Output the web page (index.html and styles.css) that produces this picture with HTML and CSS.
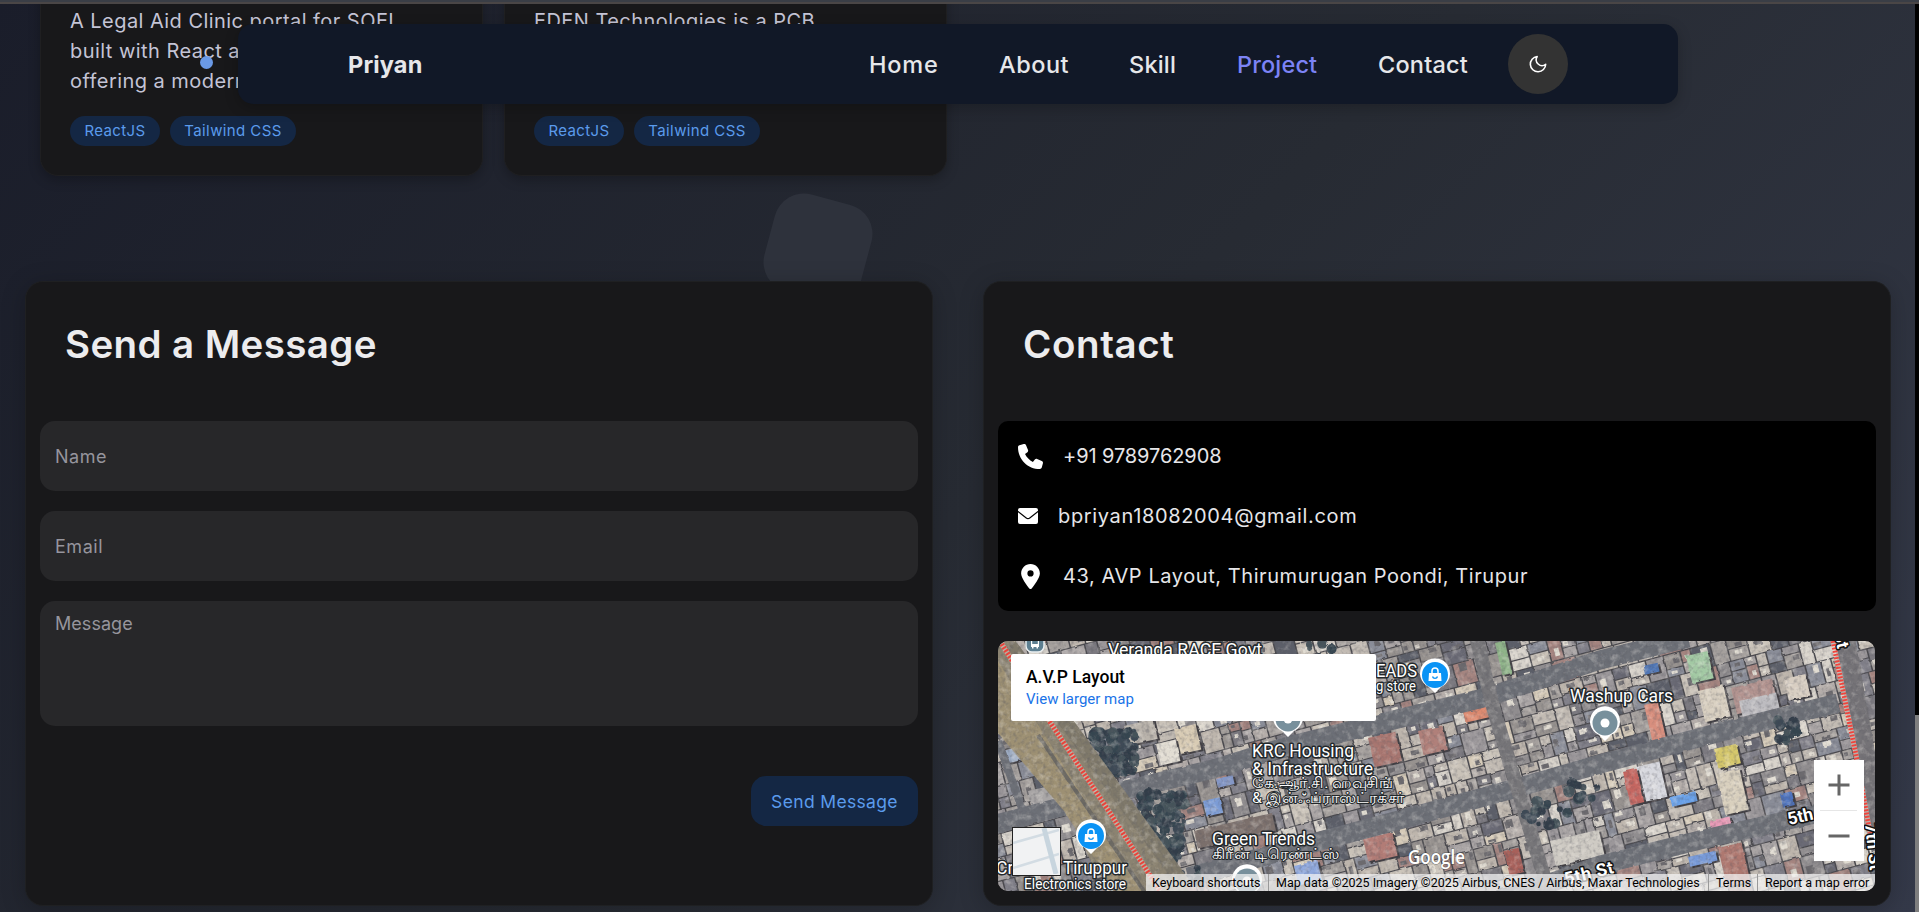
FILE: index.html
```html
<!DOCTYPE html>
<html lang="en">
<head>
<meta charset="utf-8">
<title>Priyan</title>
<link rel="stylesheet" href="styles.css">
</head>
<body>
<div class="page">
  <div class="blob"></div>
  <main class="content">
    <section class="projects">
      <article class="project">
        <p class="project-text">A Legal Aid Clinic portal for SOEL<br>built with React and Tailwind,<br>offering a modern interface.</p>
        <div class="tags"><span class="tag tag-react">ReactJS</span><span class="tag tag-tw">Tailwind CSS</span></div>
      </article>
      <article class="project">
        <p class="project-text">EDEN Technologies is a PCB<br><br><br></p>
        <div class="tags"><span class="tag tag-react">ReactJS</span><span class="tag tag-tw">Tailwind CSS</span></div>
      </article>
    </section>
    <section class="contact">
      <form class="card">
        <h2 class="title t-send">Send a Message</h2>
        <input class="field" placeholder="Name">
        <input class="field" placeholder="Email">
        <textarea class="field area" placeholder="Message"></textarea>
        <button class="send" type="button">Send Message</button>
      </form>
      <div class="card">
        <h2 class="title t-contact">Contact</h2>
        <ul class="details">
          <li class="row"><svg class="ico" width="25" height="25" viewBox="0 0 512 512"><path d="M164.900 24.600c-7.700-18.600-28-28.500-47.400-23.200l-88 24C12.100 30.200 0 46 0 64c0 247.400 200.600 448 448 448 18 0 33.800-12.100 38.600-29.500l24-88c5.300-19.400-4.600-39.700-23.200-47.400l-96-40c-16.300-6.800-35.200-2.100-46.300 11.600L304.700 368C234.300 334.700 177.300 277.700 144 207.300L193.300 167c13.700-11.200 18.400-30 11.600-46.300z"/></svg><span class="d1">+91 9789762908</span></li>
          <li class="row"><svg class="ico" width="20" height="20" viewBox="0 0 20 20"><path d="M2 2h16a2 2 0 0 1 2 2v.700l-8.600 6.700a2.300 2.300 0 0 1-2.800 0L0 4.700v-.700a2 2 0 0 1 2-2zM0 6.300l7.900 6.200a3.500 3.500 0 0 0 4.200 0l7.900-6.200v9.700a2 2 0 0 1-2 2H2a2 2 0 0 1-2-2z"/></svg><span class="d2">bpriyan18082004@gmail.com</span></li>
          <li class="row"><svg class="ico" width="25" height="25" viewBox="-64 0 512 512"><path d="M215.700 499.200C267 435 384 279.400 384 192 384 86 298 0 192 0S0 86 0 192c0 87.400 117 243 168.300 307.200 12.300 15.300 35.100 15.300 47.400 0zM192 128a64 64 0 1 1 0 128 64 64 0 1 1 0-128z"/></svg><span class="d3">43, AVP Layout, Thirumurugan Poondi, Tirupur</span></li>
        </ul>
        <div class="map">
          <svg class="sat" width="877" height="250" viewBox="0 0 877 250">
            <defs>
              <filter id="grain" x="0" y="0" width="100%" height="100%">
                <feTurbulence type="fractalNoise" baseFrequency="0.25" numOctaves="3" seed="4"/>
                <feColorMatrix values="0 0 0 0 .1  0 0 0 0 .1  0 0 0 0 .12  1.800 0 0 0 -0.800"/>
              </filter>
              <filter id="glint" x="0" y="0" width="100%" height="100%">
                <feTurbulence type="fractalNoise" baseFrequency="0.15" numOctaves="3" seed="11"/>
                <feColorMatrix values="0 0 0 0 1  0 0 0 0 .96  0 0 0 0 .9  0 2.200 0 0 -1.050"/>
              </filter>
              <filter id="rough" x="-5%" y="-5%" width="110%" height="110%">
                <feTurbulence type="fractalNoise" baseFrequency="0.12" numOctaves="2" seed="3" result="n"/>
                <feDisplacementMap in="SourceGraphic" in2="n" scale="2.500"/>
              </filter>
              <g id="pin"><path d="M0 18 L-6 12 A15 15 0 1 1 6 12Z" fill="#fff"/></g>
              <g id="bag"><path d="M-6-2H6L6.500 6H-6.500z" fill="#fff"/><path d="M-3-2v-2a3 3 0 0 1 6 0v2" fill="none" stroke="#fff" stroke-width="1.500"/><path d="M-2.500 1.500a2.600 2.600 0 0 0 5 0" fill="none" stroke="#0a93f5" stroke-width="1.400"/></g>
            </defs>
            <rect width="877" height="250" fill="#716e6e"/>
            <g filter="url(#rough)">
              <g id="roofs"></g>
              <g fill="none" stroke="#6d6f77" stroke-width="19">
                <path d="M-5 184L115 152 215 128 290 105 489 56 602 19 690-3"/>
                <path d="M190 236L315 202 442 168 515 148 602 123 719 92 840 62"/>
                <path d="M480 268L602 224 702 199 830 170"/>
                <path d="M478-5L495 66 519 146 552 255" stroke-width="14" stroke="#777679"/>
                <path d="M846-5L868 120 884 210" stroke-width="21" stroke="#747377"/>
                <path d="M0 100L25 170" stroke-width="8"/>
              </g>
              <g id="trees"></g>
              <path d="M-20-20H2L195 256H120L95 225 65 159-10 66z" fill="#8b8371"/>
              <path d="M-12 20L0 20 148 256H122L66 170-12 78z" fill="#9d9073"/>
              <path d="M40 94L150 256" stroke="#6d6a64" stroke-width="4"/>
              <path d="M12 4L185 242" stroke="#7f796b" stroke-width="14"/>
            </g>
            <rect width="877" height="250" filter="url(#grain)" opacity=".5"/>
            <rect width="877" height="250" filter="url(#glint)" opacity=".35"/>
            <path d="M2 0L52 81 112 172 162 250" fill="none" stroke="#d9cfc0" stroke-width="5" opacity=".6"/>
            <path d="M2 0L52 81 112 172 162 250" fill="none" stroke="#e8443c" stroke-width="5" stroke-dasharray="2 1.500"/>
            <path d="M835 0L859 119 872 192" fill="none" stroke="#e6d6cc" stroke-width="5" opacity=".6"/>
            <path d="M835 0L859 119 872 192" fill="none" stroke="#ef443c" stroke-width="5" stroke-dasharray="1.800 1.500"/>
            <g transform="translate(37 2)"><rect x="-9" y="-10" width="18" height="19" rx="6" fill="#5d7f91" stroke="#e9eef0" stroke-width="1.500"/><path d="M-4-4H4V4H3v1.500H1.500V4h-3v1.500H-3V4H-4z" fill="#fff"/><path d="M-2.800-2.500H2.800V1H-2.800z" fill="#5d7f91"/></g>
            <g transform="translate(290 78)"><use href="#pin"/><circle r="12.500" fill="#78909c"/><circle r="4.500" fill="#fff"/></g>
            <g transform="translate(607 82)"><use href="#pin"/><circle r="12.500" fill="#78909c"/><circle r="4.500" fill="#fff"/></g>
            <g transform="translate(249 240)"><use href="#pin"/><circle r="12.500" fill="#78909c"/><circle r="4.500" fill="#fff"/></g>
            <g transform="translate(437 34)"><use href="#pin"/><circle r="13" fill="#0a93f5"/><use href="#bag"/></g>
            <g transform="translate(93 195)"><use href="#pin"/><circle r="13" fill="#0a93f5"/><use href="#bag"/></g>
            <g class="label">
              <text x="110" y="15" textLength="154" lengthAdjust="spacingAndGlyphs">Veranda RACE Govt</text>
              <text x="378" y="36" textLength="41" lengthAdjust="spacingAndGlyphs">EADS</text>
              <text x="378" y="50" textLength="40" lengthAdjust="spacingAndGlyphs" class="small">g store</text>
              <text x="572" y="61" textLength="103" lengthAdjust="spacingAndGlyphs">Washup Cars</text>
              <text x="254" y="116" textLength="102" lengthAdjust="spacingAndGlyphs">KRC Housing</text>
              <text x="254" y="134" textLength="121" lengthAdjust="spacingAndGlyphs">&amp; Infrastructure</text>
              <text x="254" y="147" textLength="141" lengthAdjust="spacingAndGlyphs" class="tamil">கே.ஆர்.சி. ஹவுசிங்</text>
              <text x="254" y="162" textLength="153" lengthAdjust="spacingAndGlyphs" class="tamil">&amp; இன்ஃப்ராஸ்ட்ரக்சர்</text>
              <text x="214" y="204" textLength="103" lengthAdjust="spacingAndGlyphs">Green Trends</text>
              <text x="214" y="218" textLength="127" lengthAdjust="spacingAndGlyphs" class="tamil">கிரீன் டிரெண்ட்ஸ்</text>
              <text x="-2" y="233">Cr</text>
              <text x="65" y="233" textLength="64" lengthAdjust="spacingAndGlyphs">Tiruppur</text>
              <text x="26" y="248" textLength="102" lengthAdjust="spacingAndGlyphs" class="small">Electronics store</text>
              <g class="street">
                <text transform="translate(791 184) rotate(-13)">5th St</text>
                <text transform="translate(568 244) rotate(-14)" textLength="50">5th St</text>
                <text transform="translate(867 183) rotate(84)">7th St</text>
                <text transform="translate(836-8) rotate(78)">St</text>
              </g>
            </g>
            <text x="410" y="223" textLength="57" lengthAdjust="spacingAndGlyphs" class="brand">Google</text>
          </svg>
          <div class="place"><strong class="place-name">A.V.P Layout</strong><span class="place-link">View larger map</span></div>
          <div class="thumb"><svg width="46" height="46" viewBox="0 0 46 46"><rect width="46" height="46" fill="#f1f2f3"/><path d="M0 15L46 2M0 40L46 26" stroke="#d3dce3" stroke-width="2.500"/><path d="M31 0L43 46" stroke="#c8d5de" stroke-width="5"/></svg></div>
          <div class="zoom"><svg width="50" height="101" viewBox="0 0 50 101"><path d="M14.500 25h21M25 14.500v21M14.500 76h21" stroke="#666" stroke-width="3"/><path d="M6 50.500h37" stroke="#e6e6e6"/></svg></div>
          <div class="legal"><span class="l1">Keyboard shortcuts</span><span class="l2">Map data ©2025 Imagery ©2025 Airbus, CNES / Airbus, Maxar Technologies</span><span class="l3">Terms</span><span class="l4">Report a map error</span></div>
        </div>
      </div>
    </section>
  </main>
  <nav class="nav">
    <span class="logo">Priyan</span>
    <div class="links">
      <a class="n1">Home</a><a class="n2">About</a><a class="n3">Skill</a><a class="n4 active">Project</a><a class="n5">Contact</a>
    </div>
    <span class="mode"><svg width="20" height="20" viewBox="0 0 24 24" fill="none" stroke="#fff" stroke-width="1.900" stroke-linejoin="round"><path d="M11 3a7 7 0 0 0 10.200 9.300A9.200 9.200 0 1 1 11 3z"/></svg></span>
  </nav>
  <div class="cursor"></div>
  <div class="edge"></div>
  <div class="scroll"><div class="thumbbar"></div></div>
</div>
<script src="map.js"></script>
</body>
</html>
```
FILE: styles.css
```css
* { box-sizing: border-box; }
body { margin: 0; font-family: Inter, "Open Sans", sans-serif; color: #e6e6e9; }
.page { position: relative; height: 912px; overflow: hidden; background: linear-gradient(135deg, #1a1d2a 0%, #272b33 52%, #343949 100%); }
.blob { position: absolute; left: 768px; top: 198px; width: 100px; height: 100px; border-radius: 30px; background: #2e323c; transform: rotate(15deg); }
.content { position: relative; }
.projects { display: flex; align-items: flex-end; gap: 21px; height: 176px; padding-left: 40px; }
.project { flex: none; width: 443px; height: 240px; padding: 0 29px 29px; border: 1px solid #1f1f21; border-radius: 18px; background: #18181a; box-shadow: 0 4px 12px rgba(0,0,0,.25); display: flex; flex-direction: column; justify-content: flex-end; gap: 20px; }
.project-text { margin: 0; font-size: 20px; letter-spacing: .45px; line-height: 30px; color: #c4c4d6; white-space: nowrap; }
.tags { display: flex; gap: 10px; }
.tag { height: 30px; border-radius: 15px; background: #142744; color: #5b9bec; font-size: 15px; letter-spacing: .4px; line-height: 29px; text-align: center; white-space: nowrap; }
.tag-react { width: 90px; }
.tag-tw { width: 126px; }
.contact { display: grid; grid-template-columns: 908px 908px; gap: 50px; padding: 105px 0 0 25px; }
.card { height: 625px; padding: 0 14px 14px; border: 1px solid #1f2022; border-radius: 18px; background: #18181a; box-shadow: 0 4px 24px rgba(0,0,0,.22); display: flex; flex-direction: column; }
.title { margin: 0; height: 139px; padding: 37px 0 0 25px; font-size: 38.500px; font-weight: 600; line-height: 50px; color: #ececee; white-space: nowrap; }
.t-send { letter-spacing: .4px; }
.t-contact { letter-spacing: .6px; }
.field { flex: none; width: 878px; height: 70px; margin: 0 0 20px; padding: 0 15px; border: 0; border-radius: 15px; background: #272729; font: 18px Inter, sans-serif; letter-spacing: .55px; color: #fff; }
.field::placeholder { color: #96959d; opacity: 1; }
.area { height: 125px; padding-top: 12px; margin-bottom: 50px; letter-spacing: .05px; resize: none; }
.send { align-self: flex-end; width: 167px; height: 50px; padding: 1px 0 0; margin: 0; border: 0; border-radius: 15px; background: #142744; color: #5b9bec; font: 17.500px Inter, sans-serif; letter-spacing: .35px; white-space: nowrap; }
.details { margin: 0 0 30px; padding: 5px 20px; height: 190px; width: 878px; list-style: none; background: #000; border-radius: 10px; }
.row { display: flex; align-items: center; gap: 20px; height: 60px; font-size: 20px; white-space: nowrap; }
.d1 { letter-spacing: -.1px; }
.d2 { letter-spacing: .65px; }
.d3 { letter-spacing: .57px; }
.ico { flex: none; fill: #fff; }
.map { position: relative; width: 877px; height: 250px; border-radius: 10px; overflow: hidden; font-family: Roboto, sans-serif; }
.sat { display: block; }
.label text { font: 17.500px Roboto, "Noto Sans", sans-serif; fill: #fff; stroke: #23282b; stroke-width: 3px; stroke-linejoin: round; paint-order: stroke; }
.label .small { font-size: 14.500px; }
.label .tamil { font-size: 15px; stroke-width: 2px; }
.label .street text { font-weight: 700; stroke: #111; }
.brand { font: 600 20px "Open Sans", sans-serif; fill: #fff; stroke: rgba(60,60,60,.45); stroke-width: 1.500px; paint-order: stroke; }
.place { position: absolute; left: 13px; top: 13px; width: 365px; height: 67px; padding: 12px 15px; border-radius: 2px; background: #fff; display: flex; flex-direction: column; white-space: nowrap; align-items: flex-start; }
.place-name { font-size: 17.500px; font-weight: 500; line-height: 22px; color: #000; }
.place-link { font-size: 15px; line-height: 22px; color: #1a73e8; }
.thumb { position: absolute; left: 14px; top: 186px; width: 49px; height: 49px; border: 1.500px solid #222; line-height: 0; overflow: hidden; background: #f1f2f3; }
.zoom { position: absolute; left: 816px; top: 119px; width: 50px; height: 101px; background: #fff; }
.legal { position: absolute; right: 0; bottom: 0; width: 729px; height: 17px; display: flex; background: rgba(245,245,245,.72); font-size: 12.500px; line-height: 18px; color: #000; white-space: nowrap; }
.legal span { padding-left: 7px; border-left: 1px solid #999; }
.legal .l1 { width: 122px; padding-left: 6px; border: 0; }
.l2 { width: 440px; }
.l3 { width: 49px; }
.nav { position: absolute; left: 238px; top: 24px; width: 1440px; height: 80px; border-radius: 15px; background: #111827; box-shadow: 0 4px 14px rgba(0,0,0,.22); display: flex; align-items: center; padding-left: 110px; white-space: nowrap; }
.logo { width: 521px; font-size: 23.500px; font-weight: 700; letter-spacing: .15px; color: #e6e7ea; }
.links { display: flex; width: 639px; font-size: 23.500px; font-weight: 500; letter-spacing: .5px; color: #e6e7ea; }
.n1 { width: 130px; letter-spacing: .8px; } .n2 { width: 130px; } .n3 { width: 108px; letter-spacing: .2px; } .n4 { width: 141px; letter-spacing: .15px; } .n5 { letter-spacing: .2px; }
.active { color: #7c83f5; }
.mode { width: 60px; height: 60px; border-radius: 50%; background: #333; display: flex; align-items: center; justify-content: center; }
.cursor { position: absolute; left: 200px; top: 56px; width: 13px; height: 13px; border-radius: 50%; background: #6a99e6; }
.edge { position: absolute; left: 0; top: 0; width: 100%; height: 4px; background: #4a4646; border-top: 2px solid #3a3e46; }
.scroll { position: absolute; right: 0; top: 4px; width: 4px; height: 908px; background: #000; display: flex; align-items: flex-end; }
.thumbbar { width: 4px; height: 197px; background: #7e7e7e; }
```
FILE: map.js
```js
// Rooftops and trees are laid out from a seeded sequence so the map is stable.
const NS = 'http://www.w3.org/2000/svg';
let seed = 7;
const rnd = () => (seed = (seed * 16807) % 2147483647) / 2147483647;
const roofs = document.getElementById('roofs');
const trees = document.getElementById('trees');
function add(parent, tag, attrs) {
  const el = document.createElementNS(NS, tag);
  for (const k in attrs) el.setAttribute(k, attrs[k]);
  parent.appendChild(el);
}
const palette = ['#b5aeaa', '#a5a09d', '#908d8f', '#c9c2b8', '#d8d3cb', '#9b979a', '#82818a', '#bdb5ac', '#aaa5a5', '#c2bbb3', '#a4847f', '#8a8d98', '#d5cab8', '#6b6b74', '#7b7a80', '#97928f', '#5b5f69'];
const frame = document.createElementNS(NS, 'g');
frame.setAttribute('transform', 'rotate(-15)');
roofs.appendChild(frame);
for (let y = -20; y < 500; y += 23) {
  let x = -80;
  while (x < 900) {
    const w = 9 + rnd() * 16;
    // A plot holds one deep roof or two stacked ones.
    const split = rnd() > .45 ? 8 + rnd() * 7 : 23;
    const parts = split === 23 ? [[0, 23]] : [[0, split], [split, 23 - split]];
    for (const [dy, h] of parts) {
      add(frame, 'rect', { x: x + 1.5, y: y + dy + 1.5, width: w, height: h, fill: '#4a494e' });
      add(frame, 'rect', { x, y: y + dy, width: w - 1.5, height: h - 1.2, fill: palette[Math.floor(rnd() * palette.length)] });
      if (rnd() > .4) add(frame, 'rect', { x: x + rnd() * w * .5, y: y + dy + rnd() * h * .5, width: w * .35, height: h * .35, fill: rnd() > .5 ? '#e0dbd1' : '#6c6a6e' });
    }
    x += w;
  }
}
// Large or brightly coloured roofs: x, y, width, height, colour.
const special = [
  [688, 15, 22, 28, '#a3c9a4'], [497, 2, 10, 33, '#8fb489'], [205, 160, 17, 16, '#7b9cd6'], [218, 138, 17, 9, '#8497c6'],
  [672, 156, 26, 10, '#6aa2ea'], [716, 108, 23, 20, '#d6c86c'], [718, 133, 24, 42, '#d9d0be'], [552, 200, 50, 26, '#cecac3'],
  [370, 97, 28, 30, '#a87670'], [420, 90, 25, 25, '#b0807a'], [465, 70, 26, 12, '#dd8a70'], [365, 198, 30, 24, '#b27c76'],
  [506, 210, 15, 25, '#a8605a'], [638, 126, 24, 36, '#d8d9df'], [625, 131, 14, 34, '#c56660'], [712, 180, 20, 8, '#ea9cb8'],
  [646, 64, 14, 37, '#d88f7e'], [733, 47, 42, 27, '#b39490'], [741, 60, 38, 20, '#bdbcc0'], [700, 50, 26, 32, '#d8cfc0'],
  [296, 225, 24, 20, '#8fa8dd'], [720, 207, 24, 40, '#ae7870'], [690, 216, 28, 10, '#789ad8'], [782, 153, 12, 14, '#4d72bd'],
  [176, 88, 22, 26, '#d8cbb4'], [158, 103, 20, 22, '#e2ddd3'], [126, 85, 30, 20, '#b9b3ab'], [196, 190, 80, 18, '#7b6f6c'],
  [786, 38, 22, 22, '#d8cec2'], [30, 150, 30, 18, '#a9a6a6'], [5, 110, 22, 13, '#9cabc2'], [645, 25, 15, 9, '#4f76b6']
];
for (const [x, y, w, h, fill] of special) {
  add(roofs, 'rect', { x: x + 2, y: y + 2, width: w, height: h, fill: '#3f3e42', transform: `rotate(-13 ${x} ${y})` });
  add(roofs, 'rect', { x, y, width: w, height: h, fill, transform: `rotate(-13 ${x} ${y})` });
}
// Tree clusters: centre, spread and count.
const groves = [[112, 112, 26, 22, 110], [164, 186, 22, 34, 140], [90, 50, 34, 25, 40], [791, 89, 12, 10, 14], [180, 238, 24, 12, 20], [548, 172, 22, 12, 18], [330, 10, 20, 8, 8], [585, 150, 16, 8, 10]];
for (const [cx, cy, rx, ry, n] of groves)
  for (let i = 0; i < n; i++)
    add(trees, 'circle', { cx: cx + (rnd() * 2 - 1) * rx, cy: cy + (rnd() * 2 - 1) * ry, r: 2 + rnd() * 4, fill: ['#364450', '#3c4a55', '#44525a', '#303d48'][Math.floor(rnd() * 4)] });
```
